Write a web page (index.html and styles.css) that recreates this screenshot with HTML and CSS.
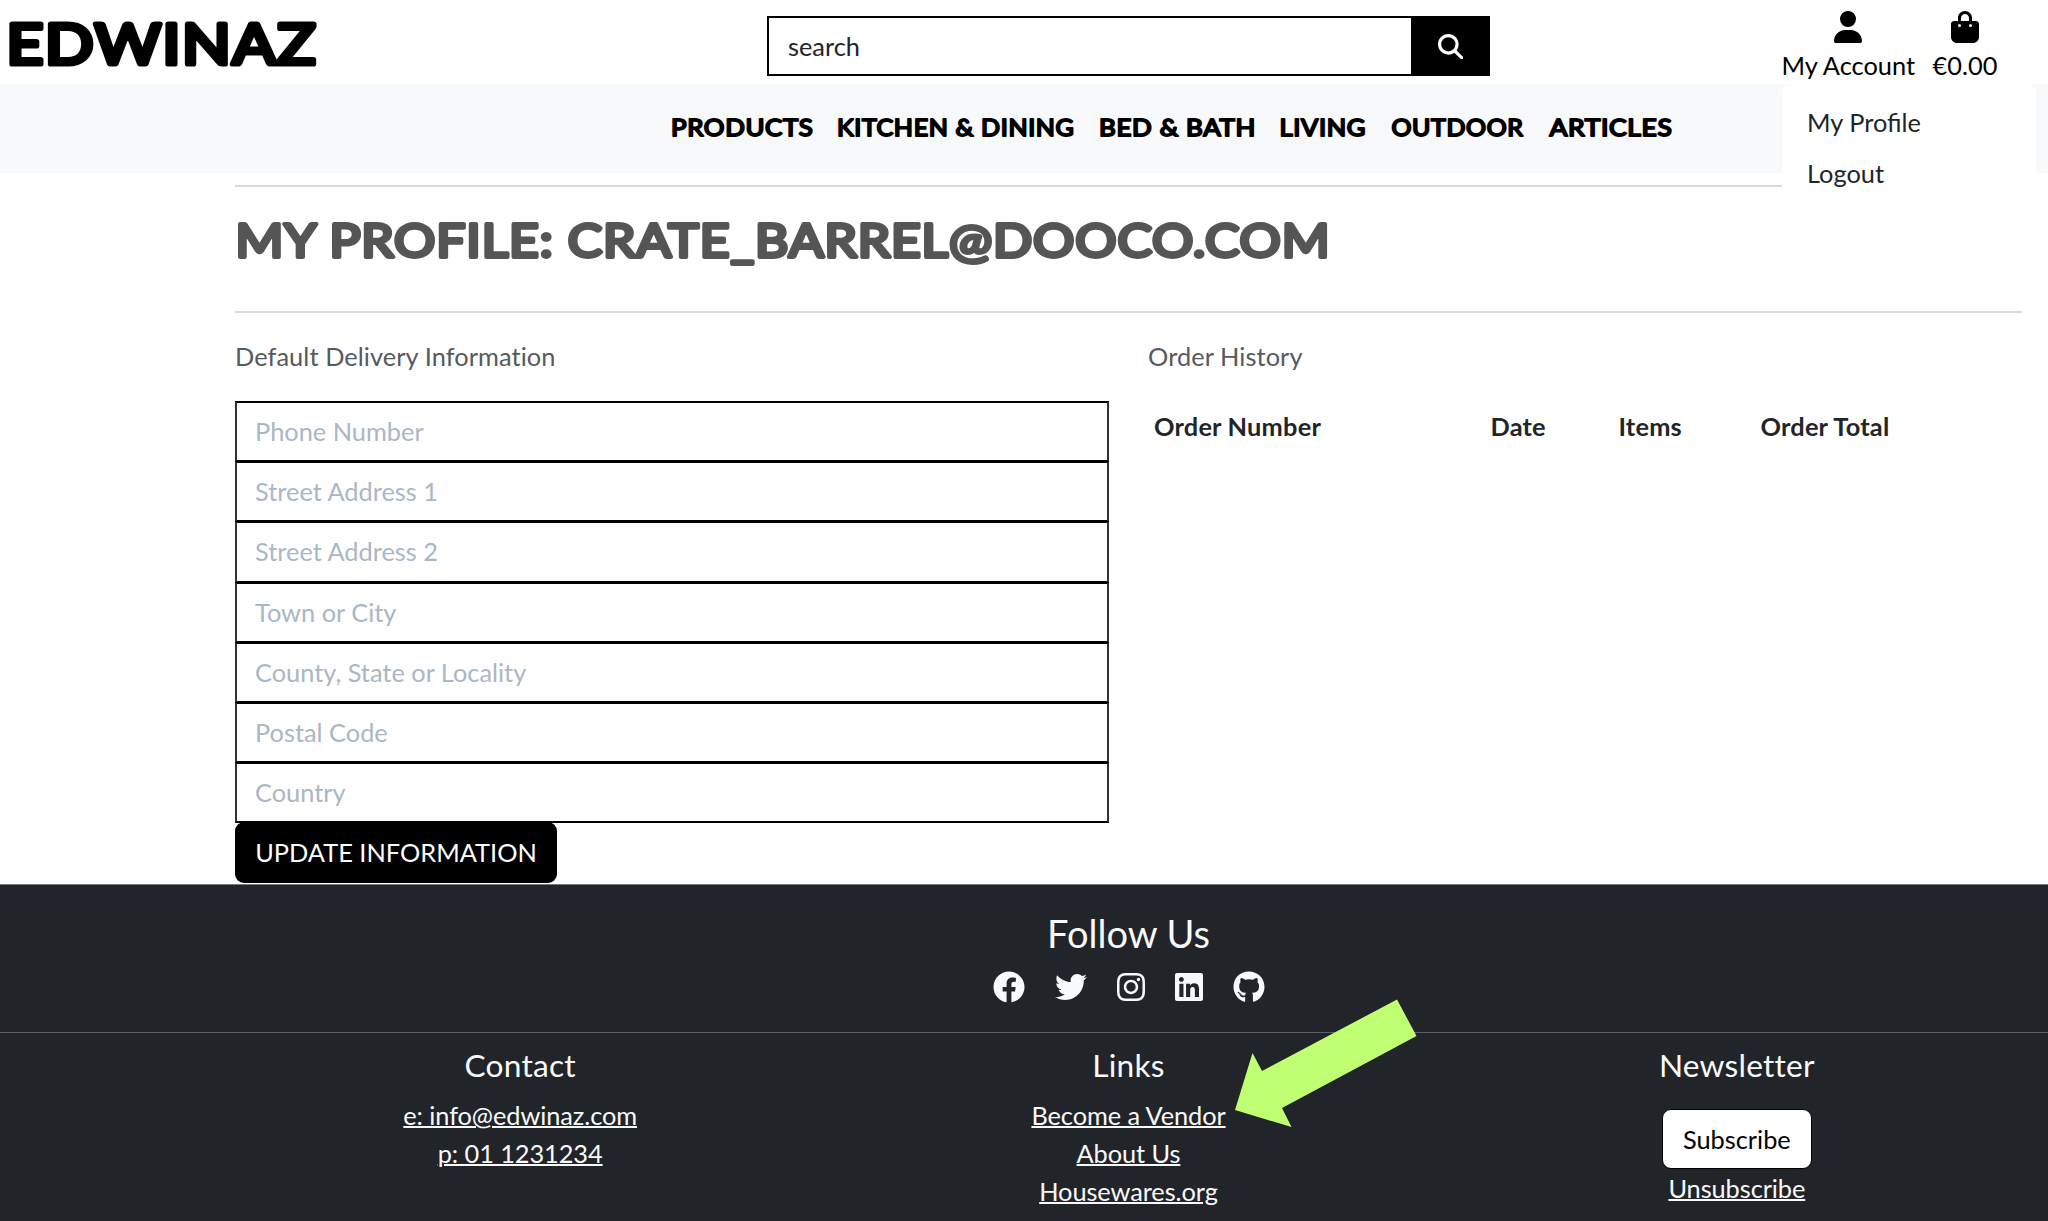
FILE: index.html
```html
<!DOCTYPE html>
<html lang="en">
<head>
<meta charset="utf-8">
<title>Edwinaz - My Profile</title>
<link rel="stylesheet" href="styles.css">
</head>
<body>
<header class="topbar">
  <a class="logo" href="#"><svg width="320" height="84"><text x="6.500" y="64.300" textLength="311" lengthAdjust="spacingAndGlyphs">EDWINAZ</text></svg></a>
  <form class="search">
    <input class="search-input" type="text" placeholder="search">
    <button class="search-btn" type="button" aria-label="Search"><svg viewBox="0 0 512 512"><path d="M416 208c0 45.900-14.900 88.300-40 122.700L502.600 457.400c12.500 12.500 12.500 32.800 0 45.300s-32.800 12.500-45.300 0L330.700 376c-34.400 25.200-76.800 40-122.700 40C93.100 416 0 322.900 0 208S93.100 0 208 0S416 93.100 416 208zM208 352a144 144 0 1 0 0-288 144 144 0 1 0 0 288z"/></svg></button>
  </form>
  <div class="account">
    <a class="tool" href="#"><svg viewBox="0 0 448 512"><path d="M224 256A128 128 0 1 0 224 0a128 128 0 1 0 0 256zm-45.700 48C79.800 304 0 383.800 0 482.300C0 498.700 13.300 512 29.700 512H418.300c16.400 0 29.700-13.300 29.700-29.700C448 383.800 368.200 304 269.700 304H178.300z"/></svg><span>My Account</span></a>
    <a class="tool" href="#"><svg viewBox="0 0 448 512"><path d="M160 112c0-35.300 28.700-64 64-64s64 28.700 64 64v48H160V112zm-48 48H48c-26.500 0-48 21.500-48 48V416c0 53 43 96 96 96H352c53 0 96-43 96-96V208c0-26.500-21.500-48-48-48H336V112C336 50.100 285.900 0 224 0S112 50.100 112 112v48zm24 48a24 24 0 1 1 0 48 24 24 0 1 1 0-48zm152 24a24 24 0 1 1 48 0 24 24 0 1 1 -48 0z"/></svg><span>€0.00</span></a>
    <div class="dropdown"><a href="#">My Profile</a><a href="#">Logout</a></div>
  </div>
</header>
<nav class="mainnav">
  <a href="#"><svg width="140" height="38"><text x="-1" y="28" textLength="142.500" lengthAdjust="spacingAndGlyphs">PRODUCTS</text></svg></a>
  <a href="#"><svg width="235" height="38"><text x="-1" y="28" textLength="237.500" lengthAdjust="spacingAndGlyphs">KITCHEN &amp; DINING</text></svg></a>
  <a href="#"><svg width="154" height="38"><text x="-1" y="28" textLength="157" lengthAdjust="spacingAndGlyphs">BED &amp; BATH</text></svg></a>
  <a href="#"><svg width="84" height="38"><text x="-0.500" y="28" textLength="86.500" lengthAdjust="spacingAndGlyphs">LIVING</text></svg></a>
  <a href="#"><svg width="131" height="38"><text x="0.500" y="28" textLength="132" lengthAdjust="spacingAndGlyphs">OUTDOOR</text></svg></a>
  <a href="#"><svg width="123" height="38"><text x="1.500" y="28" textLength="123" lengthAdjust="spacingAndGlyphs">ARTICLES</text></svg></a>
</nav>
<main class="content">
  <h1 class="title"><svg width="1110" height="124"><text x="0.500" y="70.300" textLength="1095" lengthAdjust="spacingAndGlyphs">MY PROFILE: CRATE_BARREL@DOOCO.COM</text></svg></h1>
  <div class="columns">
    <section class="delivery">
      <p class="sub">Default Delivery Information</p>
      <form class="fields">
        <input type="text" placeholder="Phone Number">
        <input type="text" placeholder="Street Address 1">
        <input type="text" placeholder="Street Address 2">
        <input type="text" placeholder="Town or City">
        <input type="text" placeholder="County, State or Locality">
        <input type="text" placeholder="Postal Code">
        <input type="text" placeholder="Country">
        <button class="update" type="button">UPDATE INFORMATION</button>
      </form>
    </section>
    <section class="history">
      <p class="sub">Order History</p>
      <div class="orders"><b>Order Number</b><b>Date</b><b>Items</b><b>Order Total</b></div>
    </section>
  </div>
</main>
<footer class="footer">
  <div class="follow">
    <h2>Follow Us</h2>
    <div class="social">
      <svg viewBox="0 0 512 512"><path d="M504 256C504 119 393 8 256 8S8 119 8 256c0 123.780 90.690 226.380 209.250 245V327.690h-63V256h63v-54.640c0-62.150 37-96.480 93.670-96.480 27.140 0 55.520 4.840 55.520 4.840v61h-31.280c-30.800 0-40.410 19.120-40.410 38.730V256h68.780l-11 71.690h-57.780V501C413.310 482.380 504 379.780 504 256z"/></svg>
      <svg viewBox="0 0 512 512"><path d="M459.370 151.716c.325 4.548.325 9.097.325 13.645 0 138.720-105.583 298.558-298.558 298.558-59.452 0-114.680-17.219-161.137-47.106 8.447.974 16.568 1.299 25.340 1.299 49.055 0 94.213-16.568 130.274-44.832-46.132-.975-84.792-31.188-98.112-72.772 6.498.974 12.995 1.624 19.818 1.624 9.421 0 18.843-1.300 27.614-3.573-48.081-9.747-84.143-51.980-84.143-102.985v-1.299c13.969 7.797 30.214 12.670 47.431 13.319-28.264-18.843-46.781-51.005-46.781-87.391 0-19.492 5.197-37.360 14.294-52.954 51.655 63.675 129.300 105.258 216.365 109.807-1.624-7.797-2.599-15.918-2.599-24.040 0-57.828 46.782-104.934 104.934-104.934 30.213 0 57.502 12.670 76.670 33.137 23.715-4.548 46.456-13.320 66.599-25.340-7.798 24.366-24.366 44.833-46.132 57.827 21.117-2.273 41.584-8.122 60.426-16.243-14.292 20.791-32.161 39.308-52.628 54.253z"/></svg>
      <svg class="narrow" viewBox="0 0 448 512"><path d="M224.100 141c-63.600 0-114.900 51.300-114.900 114.900s51.300 114.900 114.900 114.900S339 319.500 339 255.900 287.700 141 224.100 141zm0 189.600c-41.100 0-74.700-33.500-74.700-74.700s33.500-74.700 74.700-74.700 74.700 33.500 74.700 74.700-33.600 74.700-74.700 74.700zm146.400-194.300c0 14.900-12 26.800-26.800 26.800-14.900 0-26.800-12-26.800-26.800s12-26.800 26.800-26.800 26.800 12 26.800 26.800zm76.100 27.200c-1.700-35.900-9.900-67.700-36.200-93.900-26.200-26.200-58-34.400-93.900-36.200-37-2.100-147.900-2.100-184.900 0-35.800 1.700-67.600 9.900-93.900 36.100s-34.400 58-36.200 93.900c-2.100 37-2.100 147.900 0 184.900 1.700 35.900 9.900 67.700 36.200 93.900s58 34.400 93.900 36.200c37 2.100 147.900 2.100 184.900 0 35.900-1.700 67.700-9.900 93.900-36.200 26.200-26.200 34.400-58 36.200-93.900 2.100-37 2.100-147.800 0-184.800zM398.800 388c-7.800 19.600-22.900 34.700-42.600 42.600-29.500 11.700-99.500 9-132.100 9s-102.700 2.600-132.100-9c-19.600-7.800-34.700-22.900-42.600-42.600-11.700-29.500-9-99.500-9-132.100s-2.600-102.700 9-132.100c7.800-19.600 22.900-34.700 42.600-42.600 29.500-11.700 99.500-9 132.100-9s102.700-2.600 132.100 9c19.600 7.800 34.700 22.900 42.600 42.600 11.700 29.500 9 99.500 9 132.100s2.700 102.700-9 132.100z"/></svg>
      <svg class="narrow" viewBox="0 0 448 512"><path d="M416 32H31.900C14.300 32 0 46.500 0 64.300v383.400C0 465.500 14.300 480 31.900 480H416c17.600 0 32-14.500 32-32.300V64.300c0-17.800-14.400-32.300-32-32.300zM135.400 416H69V202.200h66.500V416zm-33.200-243c-21.300 0-38.500-17.300-38.500-38.500S80.900 96 102.200 96c21.200 0 38.500 17.300 38.500 38.500 0 21.300-17.200 38.500-38.500 38.500zm282.100 243h-66.400V312c0-24.800-.5-56.700-34.500-56.700-34.600 0-39.900 27-39.900 54.900V416h-66.400V202.200h63.700v29.200h.9c8.900-16.800 30.600-34.500 62.900-34.500 67.200 0 79.700 44.300 79.700 101.900V416z"/></svg>
      <svg viewBox="0 0 496 512"><path d="M165.900 397.400c0 2-2.300 3.600-5.200 3.600-3.300.3-5.600-1.300-5.600-3.600 0-2 2.300-3.600 5.200-3.600 3-.3 5.600 1.300 5.600 3.600zm-31.100-4.500c-.7 2 1.300 4.300 4.300 4.900 2.600 1 5.600 0 6.200-2s-1.300-4.300-4.300-5.200c-2.600-.7-5.500.3-6.200 2.300zm44.200-1.700c-2.900.7-4.900 2.600-4.600 4.900.3 2 2.900 3.300 5.900 2.600 2.900-.7 4.900-2.600 4.600-4.600-.3-1.900-3-3.200-5.900-2.900zM244.800 8C106.100 8 0 113.300 0 252c0 110.900 69.800 205.800 169.500 239.200 12.800 2.300 17.300-5.600 17.300-12.100 0-6.200-.3-40.400-.3-61.400 0 0-70 15-84.700-29.800 0 0-11.400-29.100-27.800-36.600 0 0-22.900-15.700 1.600-15.400 0 0 24.900 2 38.600 25.800 21.900 38.600 58.600 27.500 72.900 20.900 2.300-16 8.800-27.100 16-33.700-55.900-6.200-112.300-14.300-112.300-110.500 0-27.500 7.600-41.300 23.600-58.900-2.600-6.500-11.100-33.300 2.600-67.900 20.900-6.500 69 27 69 27 20-5.600 41.500-8.500 62.800-8.500s42.800 2.900 62.800 8.500c0 0 48.100-33.600 69-27 13.700 34.700 5.200 61.400 2.600 67.900 16 17.700 25.800 31.500 25.800 58.900 0 96.500-58.900 104.200-114.800 110.500 9.200 7.900 17 22.900 17 46.400 0 33.700-.3 75.400-.3 83.600 0 6.500 4.600 14.400 17.300 12.100C428.200 457.800 496 362.900 496 252 496 113.300 383.500 8 244.800 8zM97.200 352.900c-1.300 1-1 3.300.7 5.200 1.600 1.600 3.900 2.300 5.200 1 1.300-1 1-3.300-.7-5.200-1.600-1.600-3.900-2.300-5.200-1zm-10.800-8.100c-.7 1.300.3 2.900 2.300 3.900 1.600 1 3.600.7 4.300-.7.700-1.300-.3-2.900-2.300-3.900-2-.6-3.600-.3-4.300.7zm32.400 35.600c-1.600 1.300-1 4.300 1.300 6.200 2.300 2.300 5.200 2.600 6.500 1 1.300-1.300.7-4.300-1.300-6.200-2.200-2.300-5.200-2.600-6.500-1zm-11.400-14.700c-1.600 1-1.600 3.600 0 5.900 1.600 2.300 4.300 3.300 5.600 2.300 1.600-1.300 1.600-3.900 0-6.200-1.400-2.300-4-3.300-5.600-2z"/></svg>
    </div>
  </div>
  <div class="footcols">
    <div class="fcol"><h3>Contact</h3><a href="#">e: info@edwinaz.com</a><a href="#">p: 01 1231234</a></div>
    <div class="fcol"><h3>Links</h3><a href="#">Become a Vendor</a><a href="#">About Us</a><a href="#">Housewares.org</a></div>
    <div class="fcol"><h3>Newsletter</h3><button class="subscribe" type="button">Subscribe</button><a href="#">Unsubscribe</a></div>
  </div>
  <svg class="arrow" viewBox="0 0 182 128"><polygon points="0,110 17.500,53 27,71 162,-0.500 181.500,36 47,108 56.500,127"/></svg>
</footer>
</body>
</html>
```
FILE: styles.css
```css
* { box-sizing: border-box; }
html, body { margin: 0; height: 1221px; overflow: hidden; }
body { background: #fff; color: #212529; font-family: Lato, sans-serif; font-size: 25.36px; line-height: 38px; display: flex; flex-direction: column; }
a { color: inherit; text-decoration: none; }
input, button { font: inherit; margin: 0; }
h1, h2, h3, p { margin: 0; font-weight: 400; }

.topbar { height: 84px; display: flex; position: relative; z-index: 2; flex: none; }
.logo { width: 767px; height: 84px; }
.logo svg, .title svg, .mainnav svg { display: block; overflow: visible; }
.logo text, .title text, .mainnav text { font-family: Lato, sans-serif; font-weight: 400; stroke-linejoin: round; }
.logo text { font-size: 55.500px; letter-spacing: 1.500px; fill: #000; stroke: #000; stroke-width: 5.200px; }
.search { width: 723px; height: 60px; margin-top: 16px; display: flex; }
.search-input { flex: 1; min-width: 0; border: 2px solid #000; border-right: 0; border-radius: 0; padding: 0 19px 1px; background: #fff; outline: 0; }
.search-input::placeholder { color: #212529; opacity: 1; }
.search-btn { width: 79px; border: 0; background: #000; padding: 1px 0 0; display: flex; align-items: center; justify-content: center; }
.search-btn svg { width: 25.400px; height: 25.400px; fill: #fff; }
.account { position: relative; display: flex; gap: 17.500px; margin-left: 291.500px; padding-top: 11px; color: #000; }
.tool { display: flex; flex-direction: column; align-items: center; }
.tool svg { width: 28px; height: 32px; display: block; margin-bottom: 3px; }
.dropdown { position: absolute; top: 84px; left: 0; width: 254px; height: 130px; padding: 13px 0 0 25.500px; background: #fff; border-radius: 9px; color: #212529; }
.dropdown a { display: block; height: 50.500px; line-height: 51px; }

.mainnav { height: 89px; flex: none; background: #f8f9fb; display: flex; gap: 26.500px; padding: 24px 0 0 671.500px; }
.mainnav text { font-size: 23.200px; letter-spacing: .6px; fill: #000; stroke: #000; stroke-width: 1.900px; }

.content { margin: 12px 26px 0 235px; border-top: 2px solid #dadbdc; height: 699px; flex: none; }
.title { height: 126px; border-bottom: 2px solid #dadbdc; }
.title text { font-size: 46.200px; letter-spacing: .8px; fill: #555; stroke: #555; stroke-width: 3.900px; }
.columns { display: flex; gap: 39px; padding-top: 24px; }
.delivery { width: 874px; }
.history { flex: 1; }
.sub { color: #555a5e; height: 64px; line-height: 38px; font-variant-ligatures: none; letter-spacing: .08px; }
.fields { display: flex; flex-direction: column; align-items: flex-start; }
.fields input { width: 100%; height: 61.200px; margin-bottom: -1px; border: 2px solid #000; border-left-color: #333; border-right-color: #333; border-radius: 0; padding: 0 18px 1px; background: #fff; }
.fields input::placeholder { color: #aab7c4; opacity: 1; }
.update { position: relative; width: 322px; height: 61px; border: 0; border-radius: 9px; background: #000; color: #fff; padding: 0 0 1px; white-space: nowrap; }
.orders { display: grid; grid-template-columns: 336.500px 128px 142px auto; padding: 6px 0 0 6px; letter-spacing: .2px; }

.footer { position: relative; flex: 1; background: #212529; color: #f8f9fa; border-top: 1px solid #777a7c; }
.follow { height: 148px; padding: 25px 0 0 209px; border-bottom: 1px solid #5c6063; display: flex; flex-direction: column; align-items: center; }
.follow h2 { font-size: 38px; line-height: 46px; }
.social { display: flex; gap: 30px; margin-top: 15px; align-items: center; }
.social svg { width: 32px; height: 32px; fill: #f8f9fa; display: block; }
.social .narrow { width: 28px; }
.footcols { margin: 0 7px 0 216px; display: grid; grid-template-columns: 1fr 1fr 1fr; padding-top: 13px; }
.fcol { display: flex; flex-direction: column; align-items: center; }
.fcol h3 { font-size: 31.700px; line-height: 38px; margin-bottom: 12px; letter-spacing: .2px; }
.fcol a { text-decoration: underline; text-decoration-thickness: 2px; letter-spacing: -.08px; }
.subscribe { width: 150px; height: 60px; margin: 13px 0 0; padding: 0 0 1px; border: 1.580px solid #000; border-radius: 9px; background: #fff; color: #000; }
.arrow { position: absolute; left: 1235px; top: 115px; width: 182px; height: 128px; fill: #c1ff72; overflow: visible; }
```
